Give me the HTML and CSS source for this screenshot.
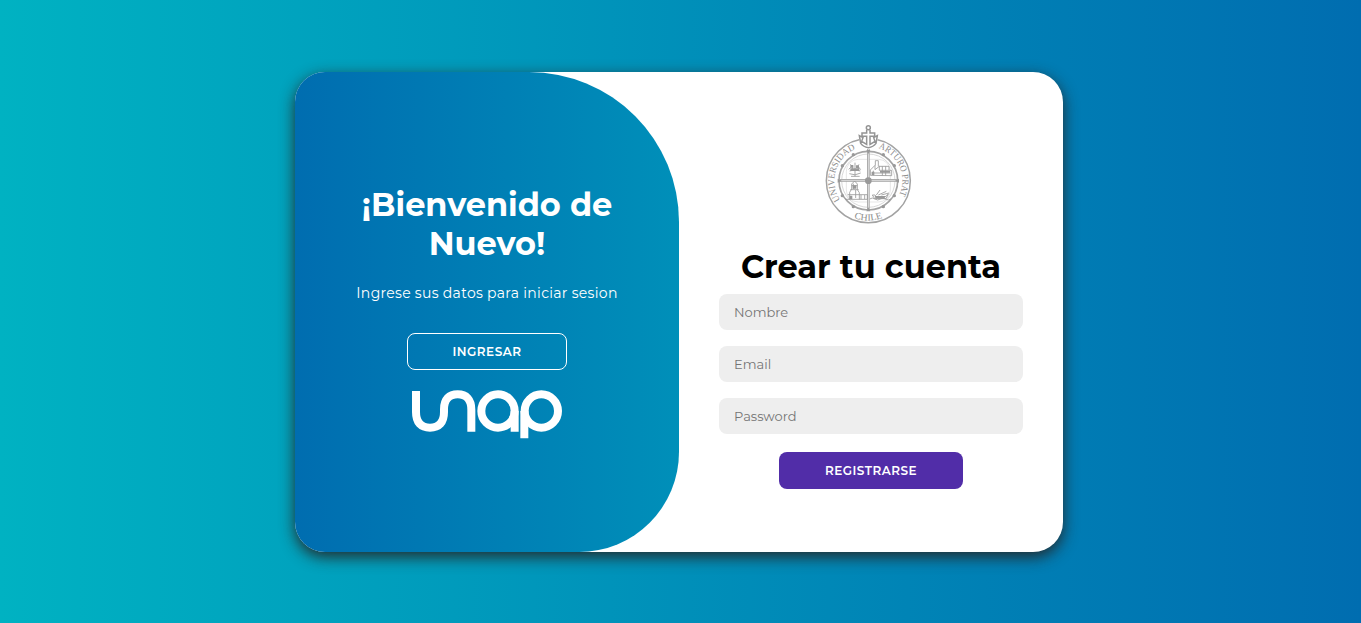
FILE: index.html
```html
<!DOCTYPE html>
<html lang="es">
<head>
<meta charset="utf-8">
<title>Crear cuenta</title>
<link rel="stylesheet" href="styles.css">
</head>
<body>
<main class="card">
  <section class="welcome">
    <h1 class="welcome-title">¡Bienvenido de<br>Nuevo!</h1>
    <p class="welcome-text">Ingrese sus datos para iniciar sesion</p>
    <button class="button button-outline" type="button"><span>INGRESAR</span></button>
    <svg class="logo" viewBox="33 191 456 150" role="img" aria-label="unap">
      <g fill="none" stroke="#fff" stroke-width="24">
        <path d="M48 197V260C48 292 63 307 90 307S132 292 132 260V252C132 222 147 207 173 207S214 222 214 253V319"/>
        <circle cx="294" cy="257" r="50"/>
        <path d="M344 257V319M373 257V339"/>
        <circle cx="424" cy="257" r="50"/>
      </g>
      <path d="M358.500 236V322" stroke="#0083b6" stroke-width="3"/>
    </svg>
  </section>
  <form class="register">
    <svg class="seal" viewBox="0 0 330 345" role="img" aria-label="Universidad Arturo Prat, Chile">
      <defs>
        <path id="ring-left" d="M76 255A102 102 0 0 1 141 97"/>
        <path id="ring-right" d="M181 97A102 102 0 0 1 244 255"/>
        <path id="ring-bottom" d="M99 300A120 120 0 0 0 221 300"/>
      </defs>
      <g fill="none" stroke="#a3a3a3" stroke-width="4.500">
        <circle cx="160" cy="197" r="126"/>
        <circle cx="160" cy="197" r="88" stroke-width="5"/>
        <circle cx="160" cy="197" r="80" stroke="#c4c4c4" stroke-width="2"/>
        <rect x="94" y="133" width="132" height="128" rx="36" stroke="#ccc" stroke-width="1.5"/>
        <path d="M160 96V286M72 196H248" stroke-width="8"/>
        <path d="M160 96V286M72 196H248" stroke="#fff" stroke-width="2"/>
      </g>
      <g fill="#999">
        <circle cx="160" cy="197" r="10"/>
        <path d="M154 105h12l-6 12zM154 289h12l-6-12zM68 191v12l12-6zM252 191v12l-12-6z"/>
        <circle cx="115" cy="119" r="5"/><circle cx="205" cy="119" r="5"/>
        <circle cx="82" cy="152" r="5"/><circle cx="238" cy="152" r="5"/>
        <circle cx="82" cy="242" r="5"/><circle cx="238" cy="242" r="5"/>
        <circle cx="115" cy="275" r="5"/><circle cx="205" cy="275" r="5"/>
      </g>
      <path d="M130 62L135 87Q145 100 160 103Q175 100 185 87L190 62L175 50H145Z" fill="#fff"/>
      <g fill="none" stroke="#949494" stroke-width="4.500">
        <circle cx="160" cy="38" r="6"/>
        <path d="M155 45V54H141V64H155V88L140 79L144 68L133 62L137 85Q145 96 160 98Q175 96 183 85L187 62L176 68L180 79L165 88V64H179V54H165V45"/>
      </g>
      <g fill="none" stroke="#999" stroke-width="2.5">
        <path d="M106 148Q118 154 112 165L131 163Q124 153 132 148M120 143V184M104 168Q118 161 136 168M103 176Q120 184 137 174M108 184H134M110 155L101 163M130 155L137 164"/>
        <path d="M166 181V165L180 151V164L193 154V166H230V182ZM181 151V137H190V154M192 154H222V165M202 154V182M212 154V182M170 174H226M175 167V181"/>
        <path d="M104 253V232L110 222V207L119 198L127 207V224L133 233V253M110 212H127M106 224H131M115 206V222M122 225V249M98 239H157V253H91M138 240V252M149 240V252"/>
        <path d="M172 240H180L186 248H208L220 237L213 251H179ZM184 240L195 225M190 240L214 229M199 240L222 234M164 252Q172 246 180 252T196 252T212 252T228 252"/>
      </g>
      <g fill="#999">
        <path d="M106 150h9v8h-9zM123 151h9v8h-9zM106 160h27v8h-27zM170 170h8v10h-8zM195 168h30v5h-30zM113 211h11v10h-11zM104 242h8v10h-8zM179 243h33l-6 8h-24z"/>
      </g>
      <g class="seal-text">
        <text><textPath href="#ring-left" textLength="182" lengthAdjust="spacingAndGlyphs">UNIVERSIDAD</textPath></text>
        <text><textPath href="#ring-right" startOffset="10" textLength="174" lengthAdjust="spacingAndGlyphs">ARTURO PRAT</textPath></text>
        <text><textPath href="#ring-bottom" startOffset="20" textLength="87" lengthAdjust="spacingAndGlyphs">CHILE</textPath></text>
      </g>
    </svg>
    <h2 class="register-title">Crear tu cuenta</h2>
    <input class="field" type="text" placeholder="Nombre">
    <input class="field" type="email" placeholder="Email">
    <input class="field" type="password" placeholder="Password">
    <button class="button button-primary" type="button"><span>REGISTRARSE</span></button>
  </form>
</main>
</body>
</html>
```

FILE: styles.css
```css
* { box-sizing: border-box; }
body {
  margin: 0;
  height: 623px;
  padding: 72px 3px 0 0;
  overflow: hidden;
  background: linear-gradient(to right, #00b2c2, #006db0);
  font-family: Montserrat, Inter, sans-serif;
}
.card {
  display: flex;
  width: 768px;
  height: 480px;
  margin-left: 295px;
  overflow: hidden;
  background: #fff;
  border-radius: 30px;
  box-shadow: 0 5px 15px rgba(37, 37, 37, .95);
}
.welcome {
  display: flex;
  flex-direction: column;
  align-items: center;
  width: 384px;
  padding-top: 113px;
  color: #fff;
  text-align: center;
  background: linear-gradient(to right, #006db0, #00b2c2) 0 0 / 200% 100%;
  border-radius: 0 150px 100px 0;
}
.welcome-title {
  margin: 0;
  font-size: 32px;
  font-weight: 700;
  line-height: 39px;
  white-space: nowrap;
}
.welcome-text {
  margin: 20px 0;
  font-size: 14px;
  line-height: 20px;
  letter-spacing: .3px;
  white-space: nowrap;
}
.button {
  height: 37px;
  padding: 0;
  border: 0;
  border-radius: 8px;
  color: #fff;
  font: 600 12px/35px Montserrat, Inter, sans-serif;
  letter-spacing: .5px;
}
.button-outline {
  width: 160px;
  margin-top: 10px;
  background: transparent;
  border: 1px solid #fff;
}
.logo {
  width: 152px;
  height: 50px;
  margin-top: 19px;
}
.register {
  display: flex;
  flex-direction: column;
  align-items: center;
  width: 384px;
  padding: 43px 40px 0;
}
.seal {
  width: 110px;
  height: 115px;
  margin-right: 2px;
}
.seal-text {
  fill: #8c8c8c;
  font: 28px "Liberation Serif", serif;
}
.register-title {
  margin: 17px 0 8px;
  font-size: 32px;
  font-weight: 700;
  line-height: 39px;
  white-space: nowrap;
}
.field {
  width: 100%;
  height: 36px;
  margin-bottom: 16px;
  padding: 0 15px;
  border: 0;
  border-radius: 8px;
  background: #eee;
  font: 13px Montserrat, Inter, sans-serif;
}
.field::placeholder { color: #757575; }
.button-primary {
  width: 184px;
  margin-top: 2px;
  background: #512da8;
}
```
